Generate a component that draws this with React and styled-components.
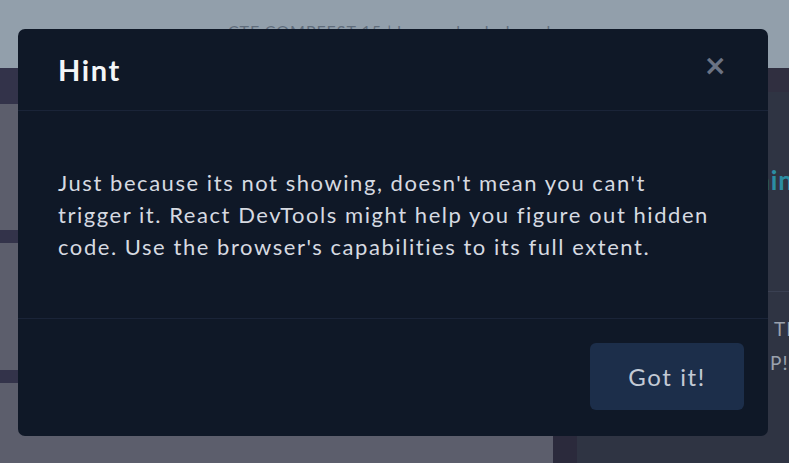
import styled, { createGlobalStyle } from "styled-components";

const GlobalStyle = createGlobalStyle`
    * { box-sizing: border-box; }
    html, body { margin: 0; padding: 0; }
    body {
        font-family: "Lato", "Noto Sans", sans-serif;
        background: #5c5e6c;
        overflow: hidden;
    }
`

const StyledPage = styled.div`
    display: grid;
    grid-template-rows: 68px 1fr;
    height: 100vh;
    width: 100vw;
`
const StyledNav = styled.div`
    background: #929fab;
    display: flex;
    justify-content: center;
    padding: 21px 10px 0 0;
    color: #5f6c7b;
    font-size: 16px;
    letter-spacing: 1px;
`
const StyledMain = styled.div`
    display: grid;
    grid-template-columns: 553px 24px 1fr;
    overflow: hidden;
`
const StyledList = styled.div`
    display: flex;
    flex-direction: column;
    gap: 13px;
    background: #33334a;
    padding-top: 36px;
`
const StyledCard = styled.div`
    background: #5c5e6c;
    height: ${props => props.h}px;
    flex-shrink: 0;
`
const StyledGutter = styled.div`
    background: #2b2a3c;
`
const StyledSide = styled.div`
    display: flex;
    flex-direction: column;
    background: #2f3443;
    border-top: 24px solid #302f40;
`
const StyledSideHead = styled.div`
    color: #2b8ea3;
    font-size: 26px;
    font-weight: 700;
    padding: 72px 0 0 14px;
    height: 200px;
    white-space: nowrap;
    border-bottom: 1px solid #3a4052;
    letter-spacing: 1px;
`
const StyledSideText = styled.div`
    color: #9aa1ad;
    font-size: 19px;
    line-height: 34px;
    padding: 20px 0 0 0;
    white-space: nowrap;
    letter-spacing: 1px;
`
const StyledSideLine = styled.div`
    padding-left: ${props => props.indent}px;
`

const StyledOverlay = styled.div`
    position: fixed;
    inset: 0;
    display: flex;
    align-items: flex-start;
    padding: 29px 0 0 18px;
`
const StyledModal = styled.div`
    width: 750px;
    height: 407px;
    background: #0f1827;
    border-radius: 7px;
    display: flex;
    flex-direction: column;
    color: #d8dce3;
`
const StyledModalHeader = styled.div`
    height: 82px;
    flex-shrink: 0;
    border-bottom: 1px solid #1a2438;
    display: flex;
    align-items: center;
    justify-content: space-between;
    padding: 0 41px 0 40px;
`
const StyledTitle = styled.h2`
    margin: 0;
    font-size: 29px;
    font-weight: 700;
    color: #f4f6f8;
    letter-spacing: 1.6px;
`
const StyledClose = styled.button`
    background: transparent;
    border: none;
    padding: 0;
    color: #6b7384;
    font-family: "DejaVu Sans", sans-serif;
    font-size: 28px;
    font-weight: 700;
    line-height: 1;
    margin-top: -8px;
    cursor: pointer;
`
const StyledModalBody = styled.div`
    height: 208px;
    flex-shrink: 0;
    border-bottom: 1px solid #1a2438;
    padding: 56px 40px 0 40px;
    font-size: 22px;
    line-height: 32px;
    letter-spacing: 1.55px;
    color: #d6dae1;
`
const StyledBodyText = styled.p`
    margin: 0;
    max-width: 668px;
`
const StyledModalFooter = styled.div`
    flex: 1;
    display: flex;
    justify-content: flex-end;
    align-items: flex-start;
    padding: 24px 24px 0 0;
`
const StyledButton = styled.button`
    width: 154px;
    height: 67px;
    background: #1c2e4a;
    border: none;
    border-radius: 6px;
    color: #c3cad5;
    font-family: "Lato", "Noto Sans", sans-serif;
    font-size: 24px;
    letter-spacing: 1.6px;
    cursor: pointer;
`

function App() {
    return (
        <>
            <GlobalStyle />
            <StyledPage>
                <StyledNav>CTF COMPFEST 15 | home &nbsp; leaderboard</StyledNav>
                <StyledMain>
                    <StyledList>
                        <StyledCard h={126} />
                        <StyledCard h={127} />
                        <StyledCard h={127} />
                    </StyledList>
                    <StyledGutter />
                    <StyledSide>
                        <StyledSideHead>Welcome Admin</StyledSideHead>
                        <StyledSideText>
                            <StyledSideLine indent={197}>THE FLAG</StyledSideLine>
                            <StyledSideLine indent={193}>P!</StyledSideLine>
                        </StyledSideText>
                    </StyledSide>
                </StyledMain>
            </StyledPage>
            <StyledOverlay>
                <StyledModal>
                    <StyledModalHeader>
                        <StyledTitle>Hint</StyledTitle>
                        <StyledClose aria-label="close">×</StyledClose>
                    </StyledModalHeader>
                    <StyledModalBody>
                        <StyledBodyText>
                            Just because its not showing, doesn't mean you can't trigger it. React DevTools might help you figure out hidden code. Use the browser's capabilities to its full extent.
                        </StyledBodyText>
                    </StyledModalBody>
                    <StyledModalFooter>
                        <StyledButton>Got it!</StyledButton>
                    </StyledModalFooter>
                </StyledModal>
            </StyledOverlay>
        </>
    );
}

export default App;
